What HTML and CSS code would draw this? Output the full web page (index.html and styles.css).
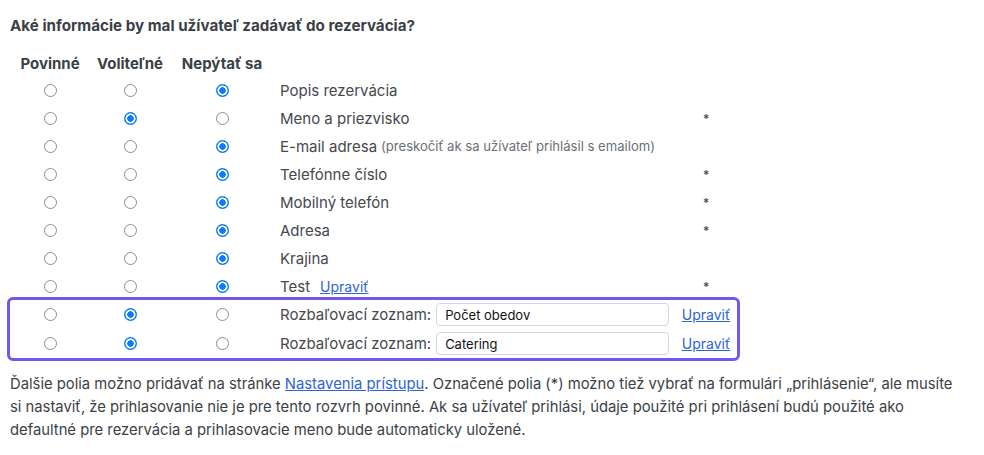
FILE: index.html
```html
<!DOCTYPE html>
<html lang="sk">
<head>
  <meta charset="UTF-8">
  <meta name="viewport" content="width=device-width, initial-scale=1.0">
  <title>Polia rezervácie</title>
  <link rel="stylesheet" href="styles.css">
</head>
<body>
  <div class="page">
    <h3 class="title">Aké informácie by mal užívateľ zadávať do rezervácia?</h3>

    <div class="fields">
      <div class="row head">
        <div>Povinné</div>
        <div>Voliteľné</div>
        <div>Nepýtať sa</div>
        <div></div>
        <div></div>
      </div>

      <div class="row">
        <div><input type="radio" name="f1"></div>
        <div><input type="radio" name="f1"></div>
        <div><input type="radio" name="f1" checked></div>
        <div class="label">Popis rezervácia</div>
        <div class="mark"></div>
      </div>
      <div class="row">
        <div><input type="radio" name="f2"></div>
        <div><input type="radio" name="f2" checked></div>
        <div><input type="radio" name="f2"></div>
        <div class="label">Meno a priezvisko</div>
        <div class="mark">*</div>
      </div>
      <div class="row">
        <div><input type="radio" name="f3"></div>
        <div><input type="radio" name="f3"></div>
        <div><input type="radio" name="f3" checked></div>
        <div class="label">E-mail adresa <span class="hint">(preskočiť ak sa užívateľ prihlásil s emailom)</span></div>
        <div class="mark"></div>
      </div>
      <div class="row">
        <div><input type="radio" name="f4"></div>
        <div><input type="radio" name="f4"></div>
        <div><input type="radio" name="f4" checked></div>
        <div class="label">Telefónne číslo</div>
        <div class="mark">*</div>
      </div>
      <div class="row">
        <div><input type="radio" name="f5"></div>
        <div><input type="radio" name="f5"></div>
        <div><input type="radio" name="f5" checked></div>
        <div class="label">Mobilný telefón</div>
        <div class="mark">*</div>
      </div>
      <div class="row">
        <div><input type="radio" name="f6"></div>
        <div><input type="radio" name="f6"></div>
        <div><input type="radio" name="f6" checked></div>
        <div class="label">Adresa</div>
        <div class="mark">*</div>
      </div>
      <div class="row">
        <div><input type="radio" name="f7"></div>
        <div><input type="radio" name="f7"></div>
        <div><input type="radio" name="f7" checked></div>
        <div class="label">Krajina</div>
        <div class="mark"></div>
      </div>
      <div class="row">
        <div><input type="radio" name="f8"></div>
        <div><input type="radio" name="f8"></div>
        <div><input type="radio" name="f8" checked></div>
        <div class="label">Test <a href="#" class="edit-inline">Upraviť</a></div>
        <div class="mark">*</div>
      </div>

      <div class="highlight">
        <div class="row custom">
          <div><input type="radio" name="f9"></div>
          <div><input type="radio" name="f9" checked></div>
          <div><input type="radio" name="f9"></div>
          <div class="label">Rozbaľovací zoznam: <input type="text" class="text-input" value="Počet obedov"></div>
          <div class="mark"><a href="#">Upraviť</a></div>
        </div>
        <div class="row custom">
          <div><input type="radio" name="f10"></div>
          <div><input type="radio" name="f10" checked></div>
          <div><input type="radio" name="f10"></div>
          <div class="label">Rozbaľovací zoznam: <input type="text" class="text-input" value="Catering"></div>
          <div class="mark"><a href="#">Upraviť</a></div>
        </div>
      </div>
    </div>

    <p class="note">Ďalšie polia možno pridávať na stránke <a href="#">Nastavenia prístupu</a>. Označené polia (*) možno tiež vybrať na formulári „prihlásenie“, ale musíte si nastaviť, že prihlasovanie nie je pre tento rozvrh povinné. Ak sa užívateľ prihlási, údaje použité pri prihlásení budú použité ako defaultné pre rezervácia a prihlasovacie meno bude automaticky uložené.</p>
  </div>
</body>
</html>
```

FILE: styles.css
```css
:root {
  --text: #3b3f46;
  --label: #45484d;
  --muted: #6b6f75;
  --link: #2d64d6;
  --blue: #0a7aff;
  --purple: #7458ee;
}

* {
  margin: 0;
  padding: 0;
  box-sizing: border-box;
  font-family: Inter, 'Liberation Sans', sans-serif;
}

body {
  background-color: #fff;
  color: var(--text);
}

.page {
  padding: 16px 10px 0;
}

.title {
  font-size: 15.2px;
  line-height: 20px;
  font-weight: 700;
  color: var(--text);
  margin-bottom: 14px;
}

.fields {
  width: 727px;
}

.row {
  display: grid;
  grid-template-columns: 80px 80px 104px 401px 62px;
  align-items: center;
  height: 28px;
}

.row > div:nth-child(-n+3) {
  display: flex;
  justify-content: center;
  align-items: center;
}

.row.head {
  height: 26px;
  font-size: 15px;
  font-weight: 700;
  color: var(--text);
}

.label {
  padding-left: 6px;
  font-size: 15px;
  color: var(--label);
  display: flex;
  align-items: center;
  white-space: nowrap;
}

.hint {
  font-size: 13.1px;
  color: var(--muted);
  margin-left: 4px;
}

.mark {
  text-align: center;
  font-size: 12px;
  font-weight: 700;
  color: #555;
}

a {
  color: var(--link);
  font-size: 14px;
  font-weight: 400;
}

.edit-inline {
  margin-left: 10px;
}

input[type="radio"] {
  appearance: none;
  -webkit-appearance: none;
  width: 13px;
  height: 13px;
  border-radius: 50%;
  border: 1px solid #8d8d8d;
  background: #fff;
  margin: 0;
}

input[type="radio"]:checked {
  border: none;
  background: radial-gradient(circle, var(--blue) 0 3px, #fff 3.5px 4.8px, var(--blue) 5.3px);
}

.highlight {
  margin: -3px -3px 0;
  border: 3px solid var(--purple);
  border-radius: 6px;
}

.row.custom {
  height: 29px;
}

.text-input {
  width: 233px;
  height: 23px;
  margin-left: 5px;
  padding: 0 8px;
  border: 1px solid #d6d6d6;
  border-radius: 4px;
  font-size: 13px;
  color: #111;
  background: #fff;
}

.note {
  max-width: 950px;
  margin-top: 12px;
  font-size: 14.8px;
  line-height: 23px;
  color: var(--text);
}

.note a {
  font-size: inherit;
}
```
